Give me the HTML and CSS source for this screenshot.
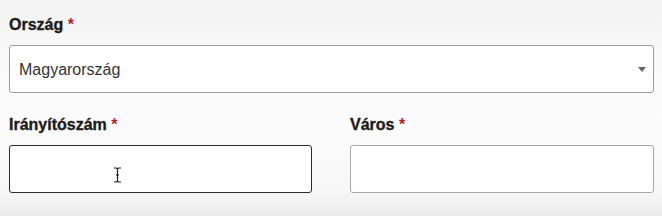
FILE: index.html
```html
<!DOCTYPE html>
<html lang="hu">
<head>
    <meta charset="UTF-8">
    <title>Szállítási cím</title>
    <link rel="stylesheet" href="styles.css">
</head>

<body>
    <form class="address-form">
        <div class="field">
            <label class="field-label" for="country">Ország <span class="req">*</span></label>
            <div class="select-wrap">
                <select id="country" class="select">
                    <option>Magyarország</option>
                </select>
            </div>
        </div>

        <div class="field-row">
            <div class="field">
                <label class="field-label" for="zip">Irányítószám <span class="req">*</span></label>
                <div class="input-wrap">
                    <input type="text" id="zip" class="input input-active">
                    <svg class="ibeam" width="9" height="16" viewBox="0 0 9 16">
                        <path d="M1 1h2.5l1 1 1-1H8M1 15h2.5l1-1 1 1H8M4.5 2v12M3 8h3" fill="none" stroke="#222" stroke-width="1.2"/>
                    </svg>
                </div>
            </div>
            <div class="field">
                <label class="field-label" for="city">Város <span class="req">*</span></label>
                <div class="input-wrap">
                    <input type="text" id="city" class="input">
                </div>
            </div>
        </div>
    </form>
</body>
</html>
```

FILE: styles.css
```css
html,
body {
    margin: 0;
    padding: 0;
}

body {
    font-family: "Liberation Sans", Arial, sans-serif;
    color: #222;
    height: 216px;
    background: linear-gradient(to bottom,
            #f3f3f3 0,
            #f8f8f8 25%,
            #fcfcfc 55%,
            #f7f7f7 88%,
            #ebebeb 100%);
}

.address-form {
    padding: 15px 8px 0 9px;
}

.field-label {
    display: block;
    font-size: 16px;
    font-weight: bold;
    line-height: 20px;
    margin-bottom: 10px;
    color: #1c1c1c;
    -webkit-text-stroke: 0.35px #1c1c1c;
}

.req {
    color: #b8232a;
    -webkit-text-stroke: 0;
}

.select-wrap,
.input-wrap {
    position: relative;
}

.select {
    display: block;
    width: 100%;
    height: 48px;
    margin: 0;
    padding: 0 30px 0 9px;
    font-family: "Liberation Sans", Arial, sans-serif;
    font-size: 16px;
    color: #333;
    background: #fff;
    border: 1px solid #9d9d9d;
    border-radius: 3px;
    -webkit-appearance: none;
    appearance: none;
}

.select-wrap::after {
    content: "";
    position: absolute;
    right: 8px;
    top: 22px;
    border-left: 4px solid transparent;
    border-right: 4px solid transparent;
    border-top: 5px solid #666;
}

.field-row {
    display: grid;
    grid-template-columns: 303px 1fr;
    column-gap: 38px;
    margin-top: 22px;
}

.input {
    display: block;
    box-sizing: border-box;
    width: 100%;
    height: 48px;
    margin: 0;
    padding: 0 9px;
    font-size: 16px;
    background: #fff;
    border: 1px solid #a8a8a8;
    border-radius: 3px;
    outline: none;
}

.input-active {
    border-color: #2b2b2b;
}

.ibeam {
    position: absolute;
    left: 104px;
    top: 22px;
}
```
